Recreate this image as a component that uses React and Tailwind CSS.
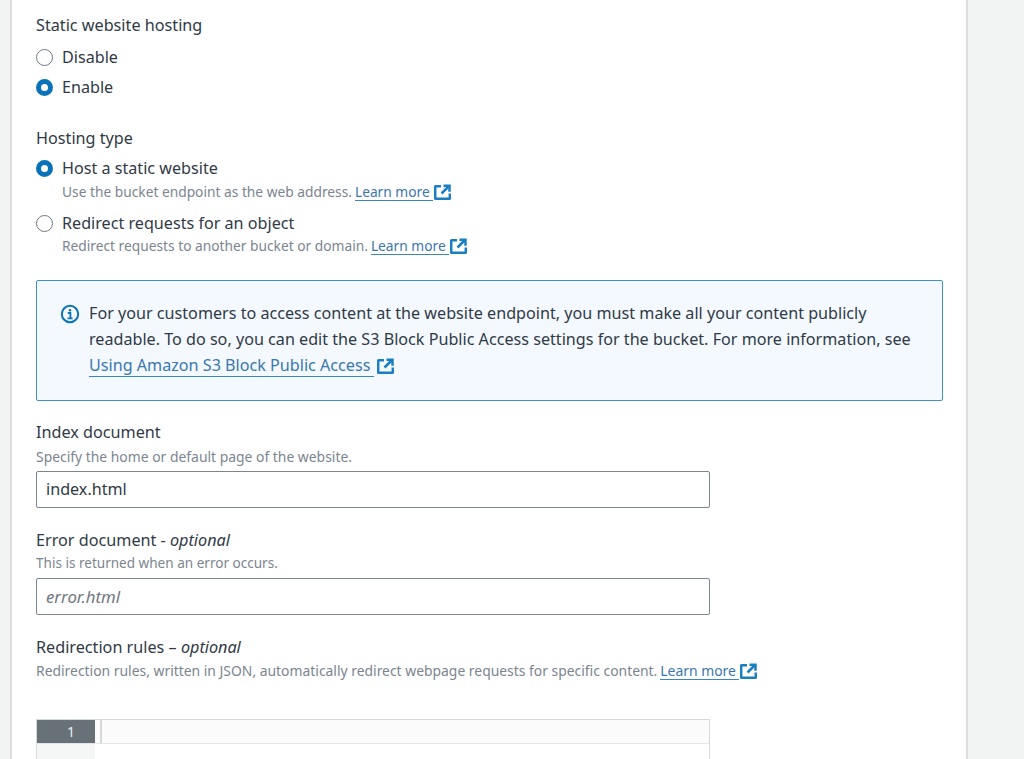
import React from "react";

const font = { fontFamily: '"Noto Sans", sans-serif' };

function ExternalIcon({ className }) {
  return (
    <svg viewBox="0 0 17 17" className={className} fill="none" stroke="#1a7fc1" strokeWidth="2.5">
      <path d="M7 2.2H1.6a.4.4 0 0 0-.4.4v11.8a.4.4 0 0 0 .4.4h13.8a.4.4 0 0 0 .4-.4V9.5" />
      <path d="M9.5 1.7h6v6" />
      <path d="M15 2 7.5 9.5" />
    </svg>
  );
}

function LearnMore({ children = "Learn more" }) {
  return (
    <span className="inline-flex items-center">
      <a className="text-[#3a77ae] border-b border-[#3a87bd] pr-[3px] leading-[17px]">{children}</a>
      <ExternalIcon className="w-[17px] h-[17px] ml-px" />
    </span>
  );
}

function Radio({ checked }) {
  if (checked) {
    return <span className="w-[17px] h-[17px] rounded-full border-[5px] border-[#0a73b7] bg-white shrink-0" />;
  }
  return <span className="w-[17px] h-[17px] rounded-full border border-[#6f7780] bg-white shrink-0" />;
}

function RadioRow({ checked, label, desc, className = "", descClass = "mt-[2px]" }) {
  return (
    <div className={className}>
      <div className="flex items-center gap-[9px] h-[22px] text-[16.15px] text-[#303a46]">
        <Radio checked={checked} />
        <span>{label}</span>
      </div>
      {desc && <div className={`pl-[26px] h-[22px] flex items-center gap-[3px] text-[13.75px] text-[#7b8590] whitespace-nowrap ${descClass}`}>{desc}</div>}
    </div>
  );
}

function Label({ children, className = "" }) {
  return <div className={`text-[16.2px] leading-[22px] text-[#303a46] ${className}`}>{children}</div>;
}

function Hint({ children, className = "" }) {
  return <div className={`leading-[20px] text-[#7b8590] flex items-center gap-[3px] ${className}`}>{children}</div>;
}

export default function App() {
  return (
    <div style={font} className="w-[1024px] h-[759px] overflow-hidden bg-[#f2f3f3]">
      <div className="ml-[10px] w-[958px] h-[759px] bg-white border-x-2 border-[#dcdddd] pl-[24px] pt-[14px]">
        <Label>Static website hosting</Label>
        <RadioRow label="Disable" className="mt-[10px]" />
        <RadioRow checked label="Enable" className="mt-[8px]" />

        <Label className="mt-[29px]">Hosting type</Label>
        <RadioRow
          checked
          label="Host a static website"
          className="mt-[8px]"
          desc={<>Use the bucket endpoint as the web address. <LearnMore /></>}
        />
        <RadioRow
          label="Redirect requests for an object"
          className="mt-[9px]"
          descClass="mt-px"
          desc={<>Redirect requests to another bucket or domain. <LearnMore /></>}
        />

        <div className="mt-[23px] w-[907px] h-[121px] bg-[#f3f9fe] border border-[#3f93c4] rounded-[2px] pl-[23px] pt-[19px] flex gap-[9px] text-[16.15px] leading-[26px] text-[#303a46]">
          <svg viewBox="0 0 20 20" className="w-5 h-5 mt-[4px] shrink-0" fill="none">
            <circle cx="10" cy="10" r="8.2" stroke="#0a73b7" strokeWidth="2" />
            <circle cx="10" cy="6.2" r="1.2" fill="#0a73b7" />
            <path d="M7.8 9h2.6v5M7.6 14.3h5" stroke="#0a73b7" strokeWidth="1.8" />
          </svg>
          <div className="w-[840px]">
            For your customers to access content at the website endpoint, you must make all your content publicly readable. To do so, you can edit the S3 Block Public Access settings for the bucket. For more information, see
            <div className="flex items-center h-[28px]">
              <a className="text-[#3a77ae] border-b border-[#3a87bd] pr-[4px] leading-[21px]">Using Amazon S3 Block Public Access</a>
              <ExternalIcon className="w-[17px] h-[17px] ml-[3px]" />
            </div>
          </div>
        </div>

        <Label className="mt-[20px]">Index document</Label>
        <Hint className="mt-[4px] text-[13.9px]">Specify the home or default page of the website.</Hint>
        <div className="mt-[4px] w-[674px] h-[37px] border border-[#7d8690] rounded-[2px] pl-[9px] flex items-center text-[16.15px] text-[#303a46]">index.html</div>

        <Label className="mt-[21px]">Error document - <i>optional</i></Label>
        <Hint className="mt-[2px] text-[13.55px]">This is returned when an error occurs.</Hint>
        <div className="mt-[5px] w-[674px] h-[37px] border border-[#7d8690] rounded-[2px] pl-[9px] flex items-center text-[16.8px] italic text-[#6f7780]">error.html</div>

        <Label className="mt-[21px]">Redirection rules – <i>optional</i></Label>
        <Hint className="mt-[3px] text-[13.9px]">
          Redirection rules, written in JSON, automatically redirect webpage requests for specific content. <LearnMore />
        </Hint>

        <div className="mt-[38px] w-[674px] border-t border-x border-[#d5dbdb]">
          <div className="flex h-[24px] border-b border-[#e4e6e6]">
            <div className="w-[58px] bg-[#687078] text-[#eceff0] text-[14px] flex items-center justify-end pr-[20px]">1</div>
            <div className="flex-1 bg-[#fbfbfb] pl-[5px]"><div className="w-[2px] h-full bg-[#d5d8d8]" /></div>
          </div>
          <div className="flex h-[40px]">
            <div className="w-[58px] bg-[#f5f6f6]" />
            <div className="flex-1 bg-white" />
          </div>
        </div>
      </div>
    </div>
  );
}
